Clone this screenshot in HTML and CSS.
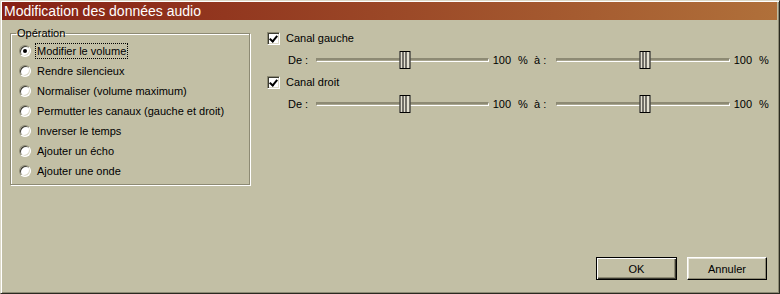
FILE: index.html
```html
<!DOCTYPE html>
<html lang="fr">
<head>
    <meta charset="UTF-8" />
    <title>Modification des données audio</title>
    <link rel="stylesheet" href="styles.css">
</head>
<body>

<div class="window">
    <div class="titlebar">Modification des données audio</div>

    <div class="content">
        <fieldset class="group">
            <legend>Opération</legend>
            <div class="radio-list">
                <div class="radio-row"><span class="radio checked"></span><span class="radio-text focused">Modifier le volume</span></div>
                <div class="radio-row"><span class="radio"></span><span class="radio-text">Rendre silencieux</span></div>
                <div class="radio-row"><span class="radio"></span><span class="radio-text">Normaliser (volume maximum)</span></div>
                <div class="radio-row"><span class="radio"></span><span class="radio-text">Permutter les canaux (gauche et droit)</span></div>
                <div class="radio-row"><span class="radio"></span><span class="radio-text">Inverser le temps</span></div>
                <div class="radio-row"><span class="radio"></span><span class="radio-text">Ajouter un écho</span></div>
                <div class="radio-row"><span class="radio"></span><span class="radio-text">Ajouter une onde</span></div>
            </div>
        </fieldset>

        <div class="channels">
            <div class="check-row"><span class="checkbox"></span><span>Canal gauche</span></div>
            <div class="slider-row">
                <span class="lbl-from">De :</span>
                <span class="track from"><span class="thumb"></span></span>
                <span class="value">100</span><span class="pct">%</span>
                <span class="lbl-to">à :</span>
                <span class="track to"><span class="thumb"></span></span>
                <span class="value">100</span><span class="pct">%</span>
            </div>

            <div class="check-row"><span class="checkbox"></span><span>Canal droit</span></div>
            <div class="slider-row">
                <span class="lbl-from">De :</span>
                <span class="track from"><span class="thumb"></span></span>
                <span class="value">100</span><span class="pct">%</span>
                <span class="lbl-to">à :</span>
                <span class="track to"><span class="thumb"></span></span>
                <span class="value">100</span><span class="pct">%</span>
            </div>
        </div>
    </div>

    <div class="actions">
        <button class="btn default">OK</button>
        <button class="btn">Annuler</button>
    </div>
</div>

</body>
</html>
```

FILE: styles.css
```css
* {
    box-sizing: border-box;
}

body {
    margin: 0;
    background: #c2bfa5;
    font-family: 'Liberation Sans', Arial, sans-serif;
    font-size: 11px;
    color: #000;
}

.window {
    width: 780px;
    height: 294px;
    display: flex;
    flex-direction: column;
    background: #c2bfa5;
    border: 1px solid;
    border-color: #dcd9c8 #2a2a20 #2a2a20 #dcd9c8;
    box-shadow: inset 1px 1px #fff, inset -1px -1px #8d8a74;
    padding: 1px;
}

.titlebar {
    height: 18px;
    line-height: 18px;
    padding-left: 2px;
    margin-right: 1px;
    color: #fff;
    font-size: 14px;
    background: linear-gradient(to right, #862014, #b0703a);
    white-space: nowrap;
}

.content {
    display: flex;
    align-items: flex-start;
    padding: 7px 8px 0 8px;
}

/* group box */
.group {
    width: 240px;
    margin: 0;
    padding: 0 0 3px 5px;
    border: 1px solid #8d8a74;
    box-shadow: inset 1px 1px #fff, 1px 1px #fff;
    min-inline-size: 0;
}

.group legend {
    padding: 0 1px;
    line-height: 13px;
}

.radio-list {
    padding-left: 3px;
    margin-top: 1px;
}

.radio-row {
    height: 20px;
    display: flex;
    align-items: center;
}

.radio {
    width: 12px;
    height: 12px;
    border-radius: 50%;
    background: #fff;
    border: 1px solid;
    border-color: #8d8a74 #fff #fff #8d8a74;
    box-shadow: inset 1px 1px #3a3a30, inset -1px -1px #dcd9c8;
    position: relative;
    flex: none;
}

.radio.checked::after {
    content: "";
    position: absolute;
    left: 3px;
    top: 3px;
    width: 4px;
    height: 4px;
    border-radius: 50%;
    background: #000;
}

.radio-text {
    margin-left: 4px;
    padding: 1px 1px;
    border: 1px solid transparent;
}

.radio-text.focused {
    border: 1px dotted #000;
}

/* channels panel */
.channels {
    margin-left: 17px;
    margin-top: 3px;
    display: flex;
    flex-direction: column;
}

.check-row {
    height: 16px;
    display: flex;
    align-items: center;
}

.checkbox {
    width: 13px;
    height: 13px;
    margin-right: 6px;
    background: #fff;
    border: 1px solid;
    border-color: #8d8a74 #fff #fff #8d8a74;
    box-shadow: inset 1px 1px #3a3a30, inset -1px -1px #dcd9c8;
    position: relative;
}

.checkbox::after {
    content: "";
    position: absolute;
    left: 3px;
    top: 1px;
    width: 3px;
    height: 6px;
    border: solid #000;
    border-width: 0 2px 2px 0;
    transform: rotate(40deg);
}

.slider-row {
    height: 28px;
    display: flex;
    align-items: center;
}

.lbl-from {
    width: 28px;
    margin-left: 21px;
}

.lbl-to {
    width: 22px;
    margin-left: 9px;
}

.track {
    position: relative;
    height: 4px;
    border: 1px solid;
    border-top-width: 2px;
    border-color: #8d8a74 #fff #fff #8d8a74;
    background: #a9a690;
}

.track.from {
    width: 173px;
}

.track.to {
    width: 174px;
}

.thumb {
    position: absolute;
    left: calc(50% + 2px);
    top: -9px;
    width: 11px;
    height: 18px;
    transform: translateX(-50%);
    border: 1px solid #000;
    background:
        linear-gradient(#000, #000) 2px 0 / 1px 100% no-repeat,
        linear-gradient(#000, #000) 5px 0 / 1px 100% no-repeat,
        #e4e1d2;
}

.value {
    width: 22px;
    text-align: right;
}

.pct {
    margin-left: 7px;
    width: 7px;
}

/* buttons */
.actions {
    margin-top: auto;
    display: flex;
    justify-content: flex-end;
    gap: 10px;
    padding: 0 11px 12px 0;
}

.btn {
    width: 80px;
    height: 23px;
    font-family: 'Liberation Sans', Arial, sans-serif;
    font-size: 11px;
    color: #000;
    background: #c2bfa5;
    border: 1px solid;
    border-color: #fff #000 #000 #fff;
    box-shadow: inset -1px -1px #8d8a74, inset 1px 1px #e8e6da;
    padding: 0;
}

.btn.default {
    width: 81px;
    border: 1px solid #000;
    box-shadow: inset 1px 1px #fff, inset -1px -1px #3a3a30, inset -2px -2px #8d8a74;
}
```
